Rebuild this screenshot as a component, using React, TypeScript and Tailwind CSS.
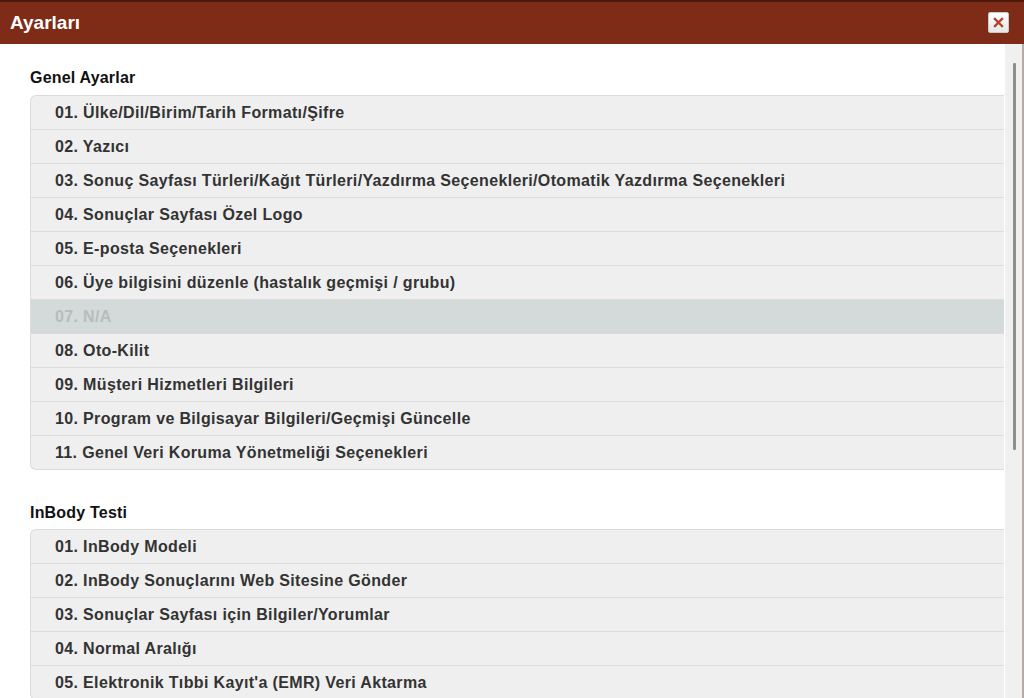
import React from "react";

const general = [
  "01. Ülke/Dil/Birim/Tarih Formatı/Şifre",
  "02. Yazıcı",
  "03. Sonuç Sayfası Türleri/Kağıt Türleri/Yazdırma Seçenekleri/Otomatik Yazdırma Seçenekleri",
  "04. Sonuçlar Sayfası Özel Logo",
  "05. E-posta Seçenekleri",
  "06. Üye bilgisini düzenle (hastalık geçmişi / grubu)",
  "07. N/A",
  "08. Oto-Kilit",
  "09. Müşteri Hizmetleri Bilgileri",
  "10. Program ve Bilgisayar Bilgileri/Geçmişi Güncelle",
  "11. Genel Veri Koruma Yönetmeliği Seçenekleri",
];

const inbody = [
  "01. InBody Modeli",
  "02. InBody Sonuçlarını Web Sitesine Gönder",
  "03. Sonuçlar Sayfası için Bilgiler/Yorumlar",
  "04. Normal Aralığı",
  "05. Elektronik Tıbbi Kayıt'a (EMR) Veri Aktarma",
];

function List({ items, disabled = [] as number[] }: { items: string[]; disabled?: number[] }) {
  return (
    <div className="flex flex-col rounded-l-[6px] border border-r-0 border-[#dcdcdc] bg-[#efefef] overflow-hidden">
      {items.map((t, i) => {
        const dis = disabled.includes(i);
        return (
          <div
            key={i}
            className={
              "shrink-0 flex items-center pl-[24px] pt-[1px] text-[16px] tracking-[0.35px] font-bold " +
              (i > 0 ? "h-[34px] border-t border-[#dcdcdc] " : "h-[33px] ") +
              (dis ? "bg-[#d4d9d9] text-[#b7bcbe]" : "text-[#333]")
            }
          >
            {t}
          </div>
        );
      })}
    </div>
  );
}

export default function App() {
  return (
    <div
      className="w-[1024px] h-[698px] overflow-hidden flex flex-col bg-white"
      style={{ fontFamily: '"Liberation Sans", Arial, sans-serif' }}
    >
      <div className="h-[44px] shrink-0 bg-[#7e2c17] border-t-[2px] border-[#4b1a0c] flex items-center justify-between pl-[10px] pr-[15px]">
        <span className="text-white text-[19px] font-bold">Ayarları</span>
        <div className="w-[21px] h-[21px] mt-[-1px] rounded-[2px] border border-[#c9c9c9] bg-gradient-to-b from-[#ffffff] to-[#e6e6e6] flex items-center justify-center">
          <svg width="11" height="11" viewBox="0 0 11 11">
            <path d="M2 2 L9 9 M9 2 L2 9" stroke="#b0442a" strokeWidth="2.4" strokeLinecap="square" />
          </svg>
        </div>
      </div>
      <div className="flex-1 flex min-h-0">
        <div className="flex-1 min-w-0 pl-[30px] pr-[1px] pt-[25px] overflow-hidden">
          <div className="text-[16px] tracking-[0.2px] font-bold text-[#111] h-[26px] leading-[18px]">Genel Ayarlar</div>
          <List items={general} disabled={[6]} />
          <div className="text-[16px] tracking-[0.2px] font-bold text-[#111] h-[25px] leading-[18px] mt-[34px]">InBody Testi</div>
          <List items={inbody} />
        </div>
        <div className="w-[17px] shrink-0 bg-[#f0f0f0] flex justify-center pt-[19px] pl-[1px]">
          <div className="w-[3px] h-[387px] bg-[#8f8f8f] rounded-[1px]" />
        </div>
        <div className="w-[2px] shrink-0 bg-[#b5aca8]" />
      </div>
    </div>
  );
}
